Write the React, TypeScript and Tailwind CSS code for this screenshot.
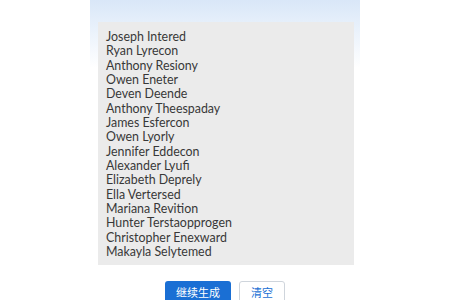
import React from "react";

const names = [
  "Joseph Intered",
  "Ryan Lyrecon",
  "Anthony Resiony",
  "Owen Eneter",
  "Deven Deende",
  "Anthony Theespaday",
  "James Esfercon",
  "Owen Lyorly",
  "Jennifer Eddecon",
  "Alexander Lyufi",
  "Elizabeth Deprely",
  "Ella Vertersed",
  "Mariana Revition",
  "Hunter Terstaopprogen",
  "Christopher Enexward",
  "Makayla Selytemed",
];

export default function App() {
  return (
    <div
      className="w-[450px] h-[300px] overflow-hidden bg-white"
      style={{ fontFamily: 'Lato, "Noto Sans CJK SC", sans-serif' }}
    >
      {/* 面板 */}
      <div className="mx-auto w-[270px] h-[272px] bg-gradient-to-b from-[#d9e7f8] via-white via-[25%] to-white pt-[22px] pl-[8px] pr-[6px]">
        <div className="h-[243px] bg-[#ebebeb] pt-[8px] pl-[8px] text-[12.4px] leading-[14.33px] text-[#383838]">
          {names.map((n) => (
            <div key={n}>{n}</div>
          ))}
        </div>
      </div>

      {/* 按钮 */}
      <div className="flex justify-center gap-[8px] mt-[9px]">
        <button className="w-[66px] h-[24px] rounded-[3px] bg-[#1a6fd4] text-white text-[11px]">
          继续生成
        </button>
        <button className="w-[46px] h-[24px] rounded-[3px] border border-[#cfd5dc] bg-white text-[#1a6fd4] text-[11px]">
          清空
        </button>
      </div>
    </div>
  );
}
